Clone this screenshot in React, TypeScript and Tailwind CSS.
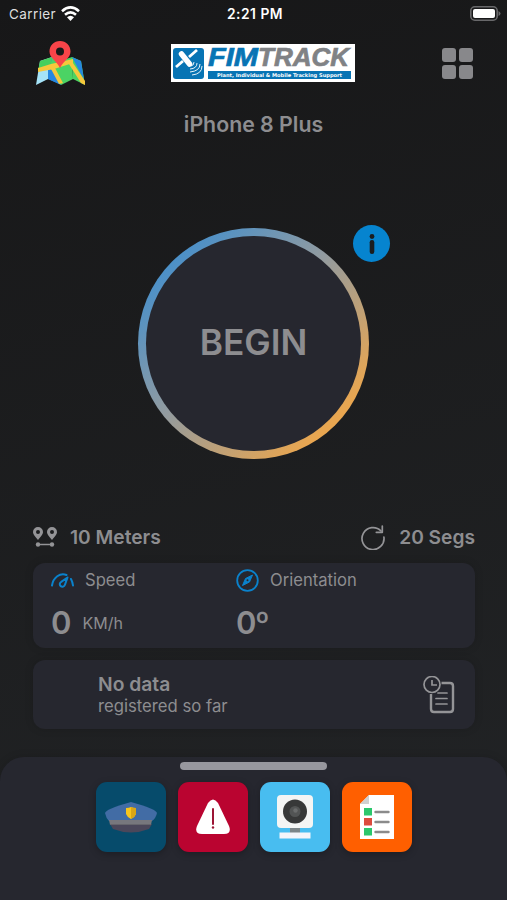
import type { ReactNode } from "react";

function MapIcon() {
  return (
    <svg width="50" height="46" viewBox="0 0 50 46">
      <path d="M5 20 17 16 13 38 1 44Z" fill="#a5e3f8" />
      <path d="M5 20 17 16 16 24 3 30Z" fill="#45cf5d" />
      <path d="M17 16 25 20 26 44 13 38Z" fill="#2687e0" />
      <path d="M17 16 25 20 37 16 38 38 26 44 15 27Z" fill="#4bd364" />
      <path d="M37 16 46 20 50 44 38 38Z" fill="#4bd364" />
      <path d="M37 16 46 20 49 39Z" fill="#2687e0" />
      <path d="M13 28 21 31 25 43 13 38Z" fill="#2687e0" />
      <path d="M3 27 16 23 38 18 38 22 19 28 3 31Z" fill="#f6c83c" />
      <path d="M15 26 20 27 28 42 24 43Z" fill="#f6c83c" />
      <path d="M32 20 36 19 50 40 50 44 46 42Z" fill="#f6c83c" />
      <path d="M25 0C19 0 14.500 4.500 14.500 10.500 14.500 17 21 19 25 27 29 19 35.500 17 35.500 10.500 35.500 4.500 31 0 25 0Z" fill="#f94449" />
      <circle cx="25" cy="10.500" r="4" fill="#191a1b" />
    </svg>
  );
}

function Logo() {
  return (
    <svg width="184" height="38" viewBox="0 0 184 38">
      <rect width="184" height="38" fill="#fff" />
      <rect x="2" y="4" width="31" height="31" rx="3" fill="#0874b4" />
      <g stroke="#fff" fill="none">
        <path d="M5 23 12 17M18 13 26 6" strokeWidth="2.800" />
        <path d="M10.500 10 18.500 20" strokeWidth="5.500" strokeLinecap="round" />
        <path d="M20 22q3-.5 3-4M19 25q7-.5 7-6M19 28q10-1 10-8M21 31q10-1 10-9" strokeWidth=".9" />
      </g>
      <g fontFamily="Liberation Sans, Arial, sans-serif" fontWeight="700">
        <text x="37" y="22.300" fontSize="25" fontStyle="italic" fill="#0874b4" stroke="#0874b4" strokeWidth=".7" textLength="50" lengthAdjust="spacingAndGlyphs">FIM</text>
        <text x="87" y="22.300" fontSize="25" fontStyle="italic" fill="#808285" stroke="#808285" strokeWidth=".7" textLength="91" lengthAdjust="spacingAndGlyphs">TRACK</text>
        <rect x="37" y="27" width="143" height="8" fill="#0874b4" />
        <text x="46" y="33" fontSize="5" fill="#fff" fontFamily="DejaVu Sans, sans-serif" textLength="125" lengthAdjust="spacingAndGlyphs">Plant, Individual &amp; Mobile Tracking Support</text>
      </g>
    </svg>
  );
}

function GridIcon() {
  return (
    <div className="grid grid-cols-2 gap-[3px]">
      <span className="size-3.5 rounded-[3px] bg-[#88888b]" />
      <span className="size-3.5 rounded-[3px] bg-[#88888b]" />
      <span className="size-3.5 rounded-[3px] bg-[#88888b]" />
      <span className="size-3.5 rounded-[3px] bg-[#88888b]" />
    </div>
  );
}

function DistanceIcon() {
  return (
    <svg width="24" height="20" viewBox="0 0 24 20" fill="#949497">
      <path fillRule="evenodd" d="M5 0a5 5 0 0 0-5 5c0 3 3 5 5 8 2-3 5-5 5-8a5 5 0 0 0-5-5Zm0 3a2 2 0 1 1 0 4 2 2 0 0 1 0-4ZM19 0a5 5 0 0 0-5 5c0 3 3 5 5 8 2-3 5-5 5-8a5 5 0 0 0-5-5Zm0 3a2 2 0 1 1 0 4 2 2 0 0 1 0-4Z" />
      <path d="M5 17.500h14" stroke="#949497" strokeWidth="1.500" />
      <circle cx="5" cy="17.500" r="2.200" />
      <circle cx="19" cy="17.500" r="2.200" />
    </svg>
  );
}

function RefreshIcon() {
  return (
    <svg width="24" height="25" viewBox="0 0 24 25" fill="none" stroke="#949497" strokeWidth="1.700" strokeLinecap="round">
      <path d="M22.900 12A11 11 0 1 1 20 6" />
      <path d="M21.300 1v6.300h-6" strokeLinejoin="round" />
    </svg>
  );
}

function SpeedIcon() {
  return (
    <svg width="23" height="15" viewBox="0 0 23 15" fill="none" stroke="#0a82cc" strokeWidth="2" strokeLinecap="round">
      <path d="M1 12.500C2.200 4.500 9-.5 15.500 2" />
      <path d="M20 6q1.600 3 2 6.500" />
      <path d="M16.500 4.500 10.200 8.800a2.600 2.600 0 1 0 3.700 3Z" strokeWidth="2" strokeLinejoin="round" />
    </svg>
  );
}

function CompassIcon() {
  return (
    <svg width="23" height="23" viewBox="0 0 23 23">
      <circle cx="11.500" cy="11.500" r="10.300" fill="none" stroke="#0a82cc" strokeWidth="1.800" />
      <path d="M16.500 6 9.500 9.500 6.500 16.500l7-3.500Z" fill="#0a82cc" stroke="#0a82cc" strokeLinejoin="round" />
      <circle cx="11.500" cy="11.300" r="1" fill="#26272f" />
    </svg>
  );
}

function HistoryIcon() {
  return (
    <svg width="32" height="38" viewBox="0 0 32 38" fill="none" stroke="#949497">
      <path d="M18.500 7h8.500q3 0 3 3v23q0 3-3 3H11q-3 0-3-3V18" strokeWidth="2.400" />
      <circle cx="9" cy="8.500" r="8" strokeWidth="1.700" />
      <path d="M9 4v5h5" strokeWidth="1.700" />
      <path d="M15 17h9M13 22.500h11M13 28h11" strokeWidth="1.700" strokeLinecap="round" />
    </svg>
  );
}

function PoliceIcon() {
  return (
    <svg width="52" height="31" viewBox="0 0 52 31">
      <path d="M0 11Q1 7 26 0 51 7 52 11 51 16 47 19H4Q1 16 0 11Z" fill="#426ca5" />
      <path d="M4 18h43l-1 5H5Z" fill="#77777d" />
      <path d="M5 22h42l-3 5Q26 34 8 27Z" fill="#4b475a" />
      <path d="M5 22.500h41" stroke="#66656c" />
      <path d="M21 6q3 0 5-1 2 1 5 1v6q-1 3-5 5-4-2-5-5Z" fill="#f8c51c" />
      <path d="M26 5q2 1 5 1v6q-1 3-5 5Z" fill="#dba615" />
    </svg>
  );
}

function AlertIcon() {
  return (
    <svg width="36" height="36" viewBox="0 0 36 36">
      <path d="M13 4Q18-3 23 4L34 27Q37 35 29 35H7Q-1 35 2 27Z" fill="#fff" />
      <path d="M18 10v15" stroke="#9c1535" strokeWidth="2" strokeLinecap="round" />
      <circle cx="18" cy="28.500" r="1.200" fill="#9c1535" />
    </svg>
  );
}

function CameraIcon() {
  return (
    <svg width="36" height="44" viewBox="0 0 36 44">
      <rect x="13" y="30" width="10" height="8" fill="#7c8588" />
      <rect width="36" height="33" rx="4" fill="#f4f5f4" />
      <circle cx="18" cy="16.500" r="12" fill="#373838" />
      <circle cx="18" cy="16.500" r="5.500" fill="#525454" />
      <circle cx="18.500" cy="15.500" r="2.200" fill="#6a6c6c" />
      <rect x="2.500" y="37.500" width="31" height="6" fill="#f4f5fa" />
    </svg>
  );
}

function ChecklistIcon() {
  return (
    <svg width="34" height="44" viewBox="0 0 34 44">
      <path d="M9 0h25v44H0V9Z" fill="#fff" />
      <path d="M9 0v9H0Z" fill="#d0d0d0" />
      <rect x="4" y="13" width="8" height="7.500" fill="#2bc76c" />
      <rect x="4" y="23" width="8" height="7.500" fill="#dc4b3e" />
      <rect x="4" y="33" width="8" height="7.500" fill="#2bc76c" />
      <path d="M15.500 17h13M15.500 27h13M15.500 37h13" stroke="#8b8b8b" strokeWidth="2.400" strokeLinecap="round" />
    </svg>
  );
}

function Tile({ className, children }: { className: string; children: ReactNode }) {
  return (
    <button className={`flex size-[70px] items-center justify-center rounded-[11px] shadow-[0_2px_7px_rgba(0,0,0,0.25)] ${className}`}>
      {children}
    </button>
  );
}

export default function App() {
  return (
    <div className="flex h-[900px] w-[507px] flex-col overflow-hidden bg-linear-[165deg,#171718,#222426] font-['Inter',sans-serif] text-[#8d8d90]">
      {/* Status bar */}
      <div className="grid h-7 shrink-0 grid-cols-3 items-center pr-[6px] pl-[9px] text-[13.5px] text-[#dedede]">
        <div className="flex items-center gap-[5px]">
          <span className="tracking-[0.4px]">Carrier</span>
          <svg className="mb-[2px]" width="19" height="15" viewBox="0 0 19 15" fill="none" stroke="#fff" strokeWidth="2.600">
            <path d="M1 5.200q8.500-7.500 17 0M4 8.700q5.500-4.800 11 0" />
            <path d="M6 11.300q3.500-3 7 0L9.500 15Z" fill="#fff" stroke="none" />
          </svg>
        </div>
        <span className="text-center text-[13.8px] font-semibold tracking-[0.5px] whitespace-nowrap text-white">2:21 PM</span>
        <svg className="mb-[2px] justify-self-end" width="31" height="15" viewBox="0 0 31 15">
          <rect x=".8" y=".8" width="26.400" height="13.400" rx="4" fill="none" stroke="#68686a" strokeWidth="1.600" />
          <rect x="3" y="3" width="22" height="9" rx="2" fill="#fff" />
          <path d="M28.500 5q2 1 2 2.500t-2 2.500Z" fill="#68686a" />
        </svg>
      </div>

      {/* Header */}
      <header className="flex h-[71px] shrink-0 items-center justify-between pr-[34px] pl-[35px]">
        <MapIcon />
        <div className="pr-[1px] pb-[2px]"><Logo /></div>
        <GridIcon />
      </header>
      <h1 className="mt-[10px] text-center text-[21.3px] leading-[30px] font-[560]">iPhone 8 Plus</h1>

      {/* Start button */}
      <div className="relative mt-[89px] size-[231px] shrink-0 self-center rounded-full bg-linear-[135deg,#4a90c9_14%,#929ba0_46%,#e9a650_84%] p-2">
        <button className="flex size-full items-center justify-center rounded-full bg-[#26272f] text-[35.3px] font-semibold">
          BEGIN
        </button>
        <div className="absolute -top-[3px] left-[215px] flex size-[37px] items-center justify-center rounded-full bg-[#0684cf]">
          <svg width="6" height="20" viewBox="0 0 6 20" fill="#1b1d1f">
            <circle cx="3" cy="2.500" r="2.400" />
            <rect x=".7" y="6" width="4.600" height="14" rx="2.200" />
          </svg>
        </div>
      </div>

      {/* Tracking settings */}
      <div className="mt-16 flex h-7 shrink-0 items-center justify-between pr-8 pl-[33px] text-[19.2px] font-[560]">
        <div className="flex items-center gap-[13px]"><DistanceIcon /><span>10 Meters</span></div>
        <div className="flex items-center gap-[14px]"><RefreshIcon /><span>20 Segs</span></div>
      </div>

      {/* Readings */}
      <section className="mt-3 mr-8 ml-[33px] grid h-[85px] shrink-0 grid-cols-[185px_1fr] rounded-xl bg-[#26272f] pl-[18px] shadow-[0_0_8px_rgba(0,0,0,0.15)]">
        <div>
          <div className="flex h-[35px] items-center gap-[11px] text-[16.6px]"><SpeedIcon /><span>Speed</span></div>
          <div className="flex h-[50px] items-center gap-[11px]">
            <span className="text-[31px] font-semibold">0</span>
            <span className="text-[16px]">KM/h</span>
          </div>
        </div>
        <div>
          <div className="flex h-[35px] items-center gap-[11px] text-[16.6px]"><CompassIcon /><span>Orientation</span></div>
          <div className="flex h-[50px] items-center text-[31px] font-semibold tracking-[-1.5px]">0º</div>
        </div>
      </section>

      <section className="mt-3 mr-8 ml-[33px] flex h-[69px] shrink-0 items-center justify-between rounded-xl bg-[#26272f] pr-[20px] pl-[65px] shadow-[0_0_8px_rgba(0,0,0,0.15)]">
        <div className="pt-px">
          <p className="text-[19.3px] leading-[23px] font-semibold">No data</p>
          <p className="text-[16.7px] leading-[21px]">registered so far</p>
        </div>
        <HistoryIcon />
      </section>

      {/* Bottom sheet */}
      <footer className="mt-7 flex flex-1 flex-col items-center rounded-t-[24px] bg-[#26272f] pt-[5px] shadow-[0_0_8px_rgba(0,0,0,0.15)]">
        <div className="h-2 w-[147px] rounded-full bg-[#97979e]" />
        <div className="mt-3 flex gap-3">
          <Tile className="bg-[#064b6b]"><PoliceIcon /></Tile>
          <Tile className="bg-[#ba0430]"><AlertIcon /></Tile>
          <Tile className="bg-[#48bdf0]"><CameraIcon /></Tile>
          <Tile className="bg-[#ff5f00]"><ChecklistIcon /></Tile>
        </div>
      </footer>
    </div>
  );
}
